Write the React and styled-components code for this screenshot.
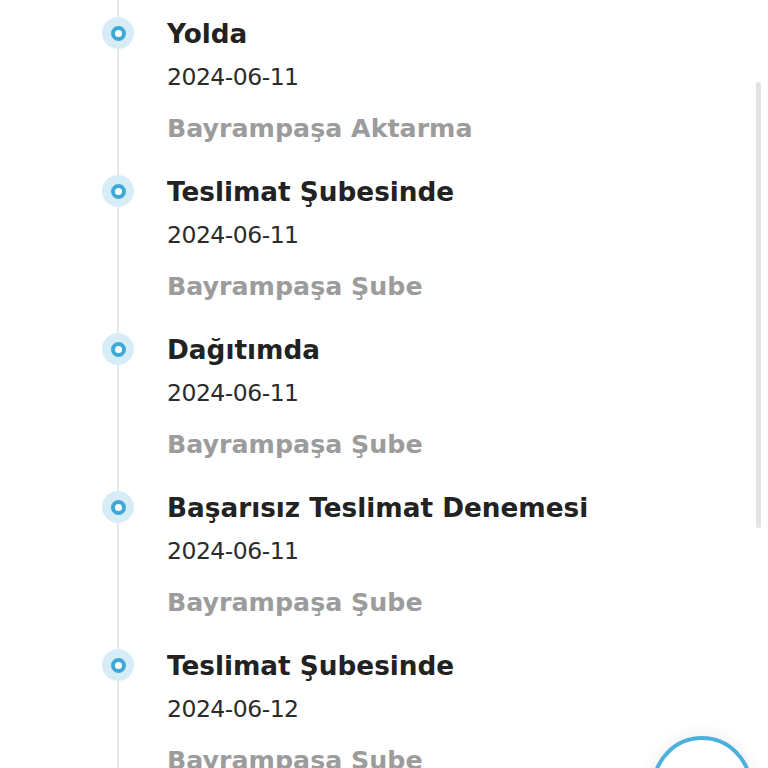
import React from "react";
import styled, { createGlobalStyle } from "styled-components";

const GlobalStyle = createGlobalStyle`
  html, body {
    margin: 0;
    padding: 0;
    background: #fff;
    height: 768px;
    overflow: hidden;
  }
  body {
    font-family: "DejaVu Sans", "Noto Sans", "Liberation Sans", sans-serif;
  }
`;

const Page = styled.div`
  position: relative;
  height: 768px;
  overflow: hidden;
  background: #fff;
`;

const Timeline = styled.ul`
  list-style: none;
  margin: 0;
  padding: 0 0 0 100px;
`;

const Item = styled.li`
  display: grid;
  grid-template-columns: 36px 1fr;
  column-gap: 31px;
  padding: 14px 0 10px;
  position: relative;

  &::before {
    content: "";
    position: absolute;
    left: 17px;
    top: 0;
    bottom: 0;
    width: 2px;
    background: #e8e8e8;
  }
`;

const MarkerCol = styled.div`
  display: flex;
  justify-content: center;
  padding-top: 3px;
  position: relative;
  z-index: 1;
`;

const Dot = styled.span`
  width: 32px;
  height: 32px;
  border-radius: 50%;
  background: #d6edf8;
  display: flex;
  align-items: center;
  justify-content: center;

  &::after {
    content: "";
    width: 7px;
    height: 7px;
    border-radius: 50%;
    background: #fff;
    border: 4px solid #40a8d6;
  }
`;

const Content = styled.div`
  display: flex;
  flex-direction: column;
`;

const Title = styled.div`
  font-size: 26.3px;
  line-height: 40px;
  font-weight: 700;
  color: #222;
`;

const DateText = styled.div`
  margin-top: 4px;
  font-size: 23.5px;
  line-height: 38px;
  font-weight: 400;
  letter-spacing: -0.5px;
  color: #2b2b2b;
`;

const Location = styled.div`
  margin-top: 14px;
  font-size: 25.3px;
  line-height: 38px;
  font-weight: 700;
  color: #9c9c9c;
`;

const ScrollThumb = styled.div`
  position: absolute;
  right: 7px;
  top: 82px;
  width: 5px;
  height: 446px;
  border-radius: 3px;
  background: #e3e3e3;
`;

const Fab = styled.button`
  position: absolute;
  right: 16px;
  top: 736px;
  width: 100px;
  height: 100px;
  border-radius: 50%;
  border: 4px solid #4bb0dc;
  background: #fff;
  box-shadow: 0 0 18px rgba(0, 0, 0, 0.08);
  padding: 0;
`;

const events = [
  { title: "Yolda", date: "2024-06-11", place: "Bayrampaşa Aktarma" },
  { title: "Teslimat Şubesinde", date: "2024-06-11", place: "Bayrampaşa Şube" },
  { title: "Dağıtımda", date: "2024-06-11", place: "Bayrampaşa Şube" },
  { title: "Başarısız Teslimat Denemesi", date: "2024-06-11", place: "Bayrampaşa Şube" },
  { title: "Teslimat Şubesinde", date: "2024-06-12", place: "Bayrampaşa Şube" },
];

export default function App() {
  return (
    <Page>
      <GlobalStyle />
      <Timeline>
        {events.map((ev, i) => (
          <Item key={i}>
            <MarkerCol>
              <Dot />
            </MarkerCol>
            <Content>
              <Title>{ev.title}</Title>
              <DateText>{ev.date}</DateText>
              <Location>{ev.place}</Location>
            </Content>
          </Item>
        ))}
      </Timeline>
      <ScrollThumb />
      <Fab aria-label="action" />
    </Page>
  );
}
